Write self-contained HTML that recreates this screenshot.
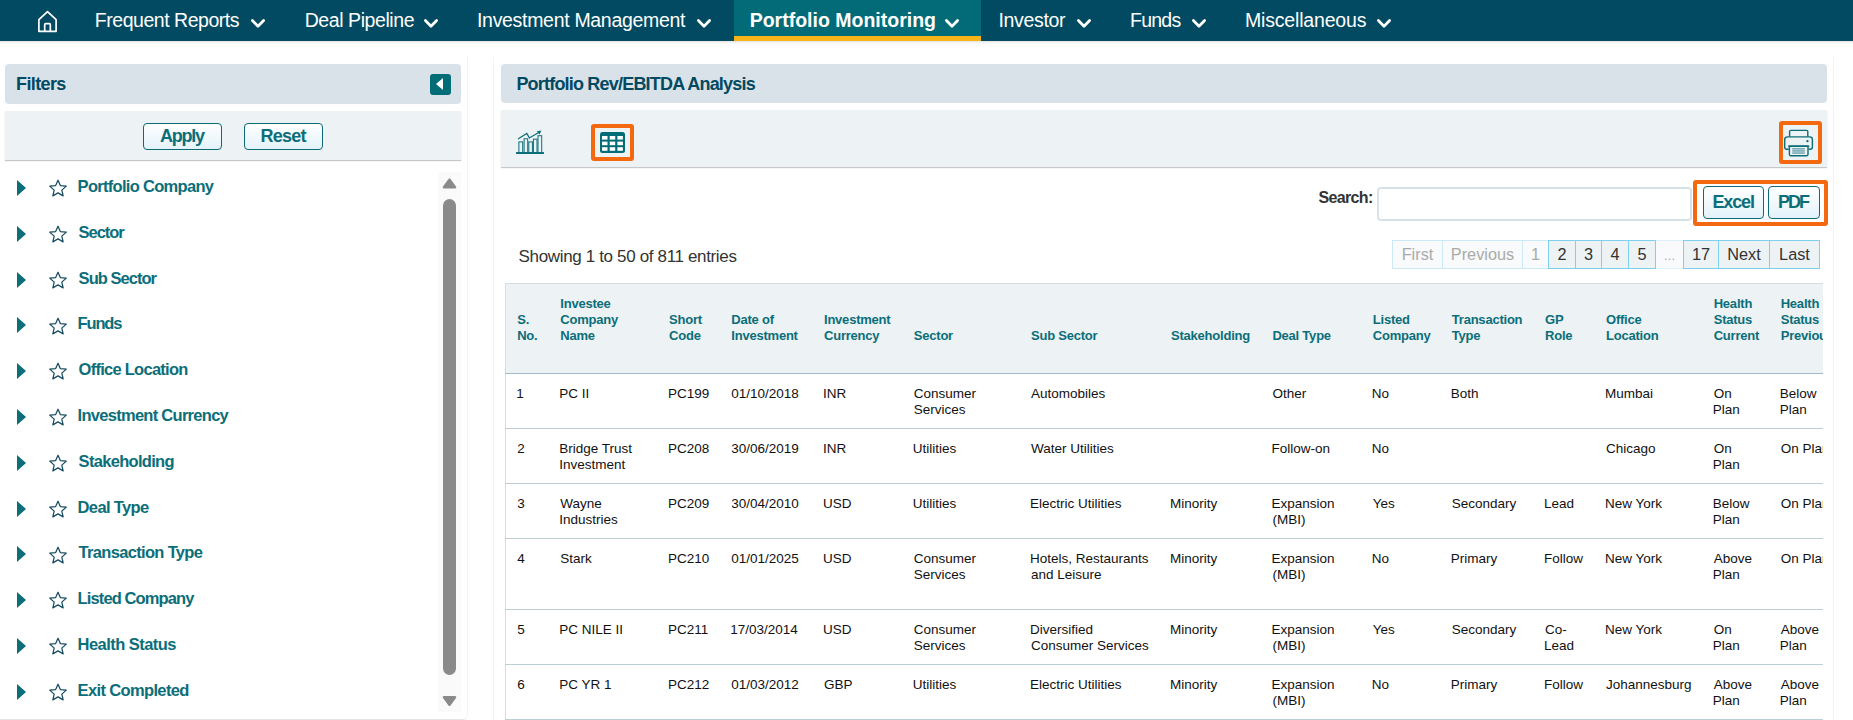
<!DOCTYPE html>
<html><head><meta charset="utf-8"><style>
*{box-sizing:border-box;margin:0;padding:0}
html,body{width:1853px;height:720px;overflow:hidden;background:#fff;font-family:"Liberation Sans",sans-serif}
.abs{position:absolute}
#nav{position:absolute;left:0;top:0;width:1853px;height:41px;background:#024a62}
#navsh{position:absolute;left:0;top:41px;width:1853px;height:3px;background:linear-gradient(rgba(90,50,50,.13),rgba(90,50,50,0))}
.ni{position:absolute;top:0;height:36px;color:#fff;font-size:19px;line-height:20px;white-space:nowrap}
.chev{position:absolute;top:19px}
#active{position:absolute;left:734px;top:0;width:247px;height:41px;background:#036b78;border-bottom:5px solid #f6b41a}
.panel{position:absolute;background:#fff;border:1px solid #f3f3f3;border-top:0;border-bottom-color:#e4e4e4;border-radius:0 0 5px 5px}
.hdr{position:absolute;background:#d8e2e8;border-radius:4px}
.tb{position:absolute;background:#edf2f5;box-shadow:0 1px 1px rgba(0,0,0,.22)}
.btn{position:absolute;border:1px solid #0b6b76;border-radius:4px;background:linear-gradient(#fff,#e3f2fa);color:#0b6e79;font-weight:bold;text-align:center;white-space:nowrap}
.fi{position:absolute;left:0;height:24px;width:430px}
.fi .tri{position:absolute;left:17px;top:0px;width:0;height:0;border-top:8px solid transparent;border-bottom:8px solid transparent;border-left:9px solid #0b6e78}
.fi svg{position:absolute;left:48px;top:0px}
.fi .t{position:absolute;left:78px;font-size:15.5px;font-weight:bold;color:#0b6e79;line-height:20px;white-space:nowrap}
.orange{position:absolute;border:4px solid #f4680f;border-radius:3px}
.pg{position:absolute;top:240px;height:29px;border:1px solid #7fd0ef;background:#edf2f5;color:#333;font-size:16px;line-height:27px;text-align:center}
.pg.dis{background:#f8fafb;border-color:#cbe9f6;color:#aaa}
#tbl{position:absolute;left:505px;top:283px;width:1318px;height:437px;overflow:hidden;border-left:1px solid #dde3e6}
.th{position:absolute;font-size:12.5px;font-weight:bold;color:#0b6e79;line-height:16px;white-space:nowrap}
.td{position:absolute;font-size:13.5px;color:#222;line-height:16px;white-space:nowrap}
.rb{position:absolute;left:0;width:1318px;height:1px;background:#bccfd6}
</style></head><body>
<div id="nav">
<svg class="abs" style="left:37px;top:10px" width="21" height="23" viewBox="0 0 21 23">
<path d="M1.9 21.3 V9.6 L10.5 1.6 L19.1 9.6 V21.3 Z" fill="none" stroke="#fff" stroke-width="1.7" stroke-linejoin="round"/>
<path d="M7.7 21.3 V14.5 Q7.7 13.6 8.6 13.6 H12.4 Q13.3 13.6 13.3 14.5 V21.3" fill="none" stroke="#fff" stroke-width="1.7"/>
</svg>
<div id="active"></div>
<svg class="abs" style="left:250px;top:18px" width="17" height="11" viewBox="0 0 17 11"><polyline points="2.4,2.6 8,8.2 13.6,2.6" fill="none" stroke="#fff" stroke-width="2.8" stroke-linecap="round" stroke-linejoin="round"/></svg>
<svg class="abs" style="left:423px;top:18px" width="17" height="11" viewBox="0 0 17 11"><polyline points="2.4,2.6 8,8.2 13.6,2.6" fill="none" stroke="#fff" stroke-width="2.8" stroke-linecap="round" stroke-linejoin="round"/></svg>
<svg class="abs" style="left:696px;top:18px" width="17" height="11" viewBox="0 0 17 11"><polyline points="2.4,2.6 8,8.2 13.6,2.6" fill="none" stroke="#fff" stroke-width="2.8" stroke-linecap="round" stroke-linejoin="round"/></svg>
<svg class="abs" style="left:944px;top:18px" width="17" height="11" viewBox="0 0 17 11"><polyline points="2.4,2.6 8,8.2 13.6,2.6" fill="none" stroke="#fff" stroke-width="2.8" stroke-linecap="round" stroke-linejoin="round"/></svg>
<svg class="abs" style="left:1076px;top:18px" width="17" height="11" viewBox="0 0 17 11"><polyline points="2.4,2.6 8,8.2 13.6,2.6" fill="none" stroke="#fff" stroke-width="2.8" stroke-linecap="round" stroke-linejoin="round"/></svg>
<svg class="abs" style="left:1191px;top:18px" width="17" height="11" viewBox="0 0 17 11"><polyline points="2.4,2.6 8,8.2 13.6,2.6" fill="none" stroke="#fff" stroke-width="2.8" stroke-linecap="round" stroke-linejoin="round"/></svg>
<svg class="abs" style="left:1376px;top:18px" width="17" height="11" viewBox="0 0 17 11"><polyline points="2.4,2.6 8,8.2 13.6,2.6" fill="none" stroke="#fff" stroke-width="2.8" stroke-linecap="round" stroke-linejoin="round"/></svg>
<div class="abs" style="left:94.80px;top:8.14px;font-size:19.5px;line-height:24px;color:#fff;letter-spacing:-0.466px;white-space:nowrap">Frequent Reports</div>
<div class="abs" style="left:304.70px;top:8.14px;font-size:19.5px;line-height:24px;color:#fff;letter-spacing:-0.422px;white-space:nowrap">Deal Pipeline</div>
<div class="abs" style="left:477.00px;top:8.14px;font-size:19.5px;line-height:24px;color:#fff;letter-spacing:-0.310px;white-space:nowrap">Investment Management</div>
<div class="abs" style="left:749.70px;top:8.14px;font-size:19.5px;line-height:24px;color:#fff;font-weight:bold;white-space:nowrap">Portfolio Monitoring</div>
<div class="abs" style="left:998.50px;top:8.14px;font-size:19.5px;line-height:24px;color:#fff;letter-spacing:-0.339px;white-space:nowrap">Investor</div>
<div class="abs" style="left:1130.00px;top:8.14px;font-size:19.5px;line-height:24px;color:#fff;letter-spacing:-0.762px;white-space:nowrap">Funds</div>
<div class="abs" style="left:1245.00px;top:8.14px;font-size:19.5px;line-height:24px;color:#fff;letter-spacing:-0.176px;white-space:nowrap">Miscellaneous</div>
</div>
<div id="navsh"></div>
<div class="panel" style="left:-6px;top:57px;width:474px;height:663px"></div>
<div class="hdr" style="left:5px;top:64px;width:456px;height:40px"></div>
<div class="abs" style="left:430px;top:74px;width:21px;height:21px;background:#036d77;border-radius:3px"></div>
<div class="abs" style="left:436px;top:78px;width:0;height:0;border-top:6.5px solid transparent;border-bottom:6.5px solid transparent;border-right:7px solid #fff"></div>
<div class="tb" style="left:5px;top:111px;width:456px;height:49px"></div>
<div class="btn" style="left:143px;top:123px;width:79px;height:27px"></div>
<div class="btn" style="left:244px;top:123px;width:79px;height:27px"></div>
<div class="abs" style="left:17px;top:180.0px;width:0;height:0;border-top:8px solid transparent;border-bottom:8px solid transparent;border-left:9px solid #0b6e78"></div>
<svg class="abs" style="left:48px;top:179.2px" width="20" height="19" viewBox="0 0 20 19"><path d="M10 1.2 L12.35 6.6 L18.3 7.1 L13.8 11.1 L15.15 16.9 L10 13.85 L4.85 16.9 L6.2 11.1 L1.7 7.1 L7.65 6.6 Z" fill="none" stroke="#174c60" stroke-width="1.25" stroke-linejoin="round"/></svg>
<div class="abs" style="left:17px;top:225.8px;width:0;height:0;border-top:8px solid transparent;border-bottom:8px solid transparent;border-left:9px solid #0b6e78"></div>
<svg class="abs" style="left:48px;top:225.0px" width="20" height="19" viewBox="0 0 20 19"><path d="M10 1.2 L12.35 6.6 L18.3 7.1 L13.8 11.1 L15.15 16.9 L10 13.85 L4.85 16.9 L6.2 11.1 L1.7 7.1 L7.65 6.6 Z" fill="none" stroke="#174c60" stroke-width="1.25" stroke-linejoin="round"/></svg>
<div class="abs" style="left:17px;top:271.6px;width:0;height:0;border-top:8px solid transparent;border-bottom:8px solid transparent;border-left:9px solid #0b6e78"></div>
<svg class="abs" style="left:48px;top:270.8px" width="20" height="19" viewBox="0 0 20 19"><path d="M10 1.2 L12.35 6.6 L18.3 7.1 L13.8 11.1 L15.15 16.9 L10 13.85 L4.85 16.9 L6.2 11.1 L1.7 7.1 L7.65 6.6 Z" fill="none" stroke="#174c60" stroke-width="1.25" stroke-linejoin="round"/></svg>
<div class="abs" style="left:17px;top:317.4px;width:0;height:0;border-top:8px solid transparent;border-bottom:8px solid transparent;border-left:9px solid #0b6e78"></div>
<svg class="abs" style="left:48px;top:316.6px" width="20" height="19" viewBox="0 0 20 19"><path d="M10 1.2 L12.35 6.6 L18.3 7.1 L13.8 11.1 L15.15 16.9 L10 13.85 L4.85 16.9 L6.2 11.1 L1.7 7.1 L7.65 6.6 Z" fill="none" stroke="#174c60" stroke-width="1.25" stroke-linejoin="round"/></svg>
<div class="abs" style="left:17px;top:363.2px;width:0;height:0;border-top:8px solid transparent;border-bottom:8px solid transparent;border-left:9px solid #0b6e78"></div>
<svg class="abs" style="left:48px;top:362.4px" width="20" height="19" viewBox="0 0 20 19"><path d="M10 1.2 L12.35 6.6 L18.3 7.1 L13.8 11.1 L15.15 16.9 L10 13.85 L4.85 16.9 L6.2 11.1 L1.7 7.1 L7.65 6.6 Z" fill="none" stroke="#174c60" stroke-width="1.25" stroke-linejoin="round"/></svg>
<div class="abs" style="left:17px;top:409.0px;width:0;height:0;border-top:8px solid transparent;border-bottom:8px solid transparent;border-left:9px solid #0b6e78"></div>
<svg class="abs" style="left:48px;top:408.2px" width="20" height="19" viewBox="0 0 20 19"><path d="M10 1.2 L12.35 6.6 L18.3 7.1 L13.8 11.1 L15.15 16.9 L10 13.85 L4.85 16.9 L6.2 11.1 L1.7 7.1 L7.65 6.6 Z" fill="none" stroke="#174c60" stroke-width="1.25" stroke-linejoin="round"/></svg>
<div class="abs" style="left:17px;top:454.8px;width:0;height:0;border-top:8px solid transparent;border-bottom:8px solid transparent;border-left:9px solid #0b6e78"></div>
<svg class="abs" style="left:48px;top:454.0px" width="20" height="19" viewBox="0 0 20 19"><path d="M10 1.2 L12.35 6.6 L18.3 7.1 L13.8 11.1 L15.15 16.9 L10 13.85 L4.85 16.9 L6.2 11.1 L1.7 7.1 L7.65 6.6 Z" fill="none" stroke="#174c60" stroke-width="1.25" stroke-linejoin="round"/></svg>
<div class="abs" style="left:17px;top:500.6px;width:0;height:0;border-top:8px solid transparent;border-bottom:8px solid transparent;border-left:9px solid #0b6e78"></div>
<svg class="abs" style="left:48px;top:499.8px" width="20" height="19" viewBox="0 0 20 19"><path d="M10 1.2 L12.35 6.6 L18.3 7.1 L13.8 11.1 L15.15 16.9 L10 13.85 L4.85 16.9 L6.2 11.1 L1.7 7.1 L7.65 6.6 Z" fill="none" stroke="#174c60" stroke-width="1.25" stroke-linejoin="round"/></svg>
<div class="abs" style="left:17px;top:546.4px;width:0;height:0;border-top:8px solid transparent;border-bottom:8px solid transparent;border-left:9px solid #0b6e78"></div>
<svg class="abs" style="left:48px;top:545.6px" width="20" height="19" viewBox="0 0 20 19"><path d="M10 1.2 L12.35 6.6 L18.3 7.1 L13.8 11.1 L15.15 16.9 L10 13.85 L4.85 16.9 L6.2 11.1 L1.7 7.1 L7.65 6.6 Z" fill="none" stroke="#174c60" stroke-width="1.25" stroke-linejoin="round"/></svg>
<div class="abs" style="left:17px;top:592.2px;width:0;height:0;border-top:8px solid transparent;border-bottom:8px solid transparent;border-left:9px solid #0b6e78"></div>
<svg class="abs" style="left:48px;top:591.4px" width="20" height="19" viewBox="0 0 20 19"><path d="M10 1.2 L12.35 6.6 L18.3 7.1 L13.8 11.1 L15.15 16.9 L10 13.85 L4.85 16.9 L6.2 11.1 L1.7 7.1 L7.65 6.6 Z" fill="none" stroke="#174c60" stroke-width="1.25" stroke-linejoin="round"/></svg>
<div class="abs" style="left:17px;top:638.0px;width:0;height:0;border-top:8px solid transparent;border-bottom:8px solid transparent;border-left:9px solid #0b6e78"></div>
<svg class="abs" style="left:48px;top:637.2px" width="20" height="19" viewBox="0 0 20 19"><path d="M10 1.2 L12.35 6.6 L18.3 7.1 L13.8 11.1 L15.15 16.9 L10 13.85 L4.85 16.9 L6.2 11.1 L1.7 7.1 L7.65 6.6 Z" fill="none" stroke="#174c60" stroke-width="1.25" stroke-linejoin="round"/></svg>
<div class="abs" style="left:17px;top:683.8px;width:0;height:0;border-top:8px solid transparent;border-bottom:8px solid transparent;border-left:9px solid #0b6e78"></div>
<svg class="abs" style="left:48px;top:683.0px" width="20" height="19" viewBox="0 0 20 19"><path d="M10 1.2 L12.35 6.6 L18.3 7.1 L13.8 11.1 L15.15 16.9 L10 13.85 L4.85 16.9 L6.2 11.1 L1.7 7.1 L7.65 6.6 Z" fill="none" stroke="#174c60" stroke-width="1.25" stroke-linejoin="round"/></svg>
<div class="abs" style="left:438px;top:172px;width:23px;height:540px;background:#fafafa"></div>
<svg class="abs" style="left:441px;top:177px" width="17" height="13" viewBox="0 0 17 13"><path d="M8.5 2.8 L14 10.2 L3 10.2 Z" fill="#8a8a8a" stroke="#8a8a8a" stroke-width="2.6" stroke-linejoin="round"/></svg>
<div class="abs" style="left:443px;top:199px;width:13px;height:476px;background:#8a8a8a;border-radius:6.5px"></div>
<svg class="abs" style="left:441px;top:695px" width="17" height="13" viewBox="0 0 17 13"><path d="M8.5 9.6 L14 2.2 L3 2.2 Z" fill="#8a8a8a" stroke="#8a8a8a" stroke-width="2.6" stroke-linejoin="round"/></svg>
<div class="panel" style="left:493px;top:57px;width:1341px;height:700px"></div>
<div class="hdr" style="left:501px;top:64px;width:1326px;height:39px"></div>
<div class="tb" style="left:501px;top:110px;width:1326px;height:57px"></div>
<svg class="abs" style="left:515px;top:130px" width="31" height="25" viewBox="0 0 31 25">
<g fill="none" stroke="#0b6e78" stroke-width="1">
<rect x="3.9" y="11.9" width="3.8" height="11"/><rect x="9.1" y="8.8" width="3.6" height="14"/><rect x="13.8" y="11.9" width="3.6" height="11"/><rect x="18.4" y="9.2" width="3.6" height="13.7"/><rect x="23" y="5.7" width="3.7" height="17.2"/>
<path d="M3 8.9 L11.8 3.4 L14.3 7.9 L24.2 2.2" stroke-width="1.2"/>
</g>
<path d="M26.3 0.6 L21.9 1.3 L24.6 4.6 Z" fill="#0b6e78"/>
<rect x="1" y="22" width="28" height="1.9" rx="0.5" fill="#0b6e78"/>
</svg>
<div class="orange" style="left:591px;top:124px;width:43px;height:37px"></div>
<svg class="abs" style="left:600px;top:132px" width="25" height="21" viewBox="0 0 25 21">
<rect x="0" y="0" width="25" height="21" rx="2.5" fill="#036d77"/>
<g fill="#fff">
<rect x="2" y="4" width="5.5" height="3.6"/><rect x="9.7" y="4" width="5.5" height="3.6"/><rect x="17.4" y="4" width="5.5" height="3.6"/>
<rect x="2" y="9.6" width="5.5" height="3.6"/><rect x="9.7" y="9.6" width="5.5" height="3.6"/><rect x="17.4" y="9.6" width="5.5" height="3.6"/>
<rect x="2" y="15.2" width="5.5" height="3.6"/><rect x="9.7" y="15.2" width="5.5" height="3.6"/><rect x="17.4" y="15.2" width="5.5" height="3.6"/>
</g></svg>
<div class="orange" style="left:1779px;top:121px;width:43px;height:43px"></div>
<svg class="abs" style="left:1783px;top:129px" width="31" height="28" viewBox="0 0 31 28">
<g fill="none" stroke="#0b6e78" stroke-width="1.4" stroke-linejoin="round">
<path d="M6.6 7.6 V2.6 Q6.6 1.4 7.8 1.4 H23.6 Q24.8 1.4 24.8 2.6 V7.6"/>
<path d="M5.8 20.3 H3.9 Q1.7 20.3 1.7 18.1 V10.4 Q1.7 7.9 4.6 7.9 H26.6 Q29.4 7.9 29.4 10.4 V18.1 Q29.4 20.3 27.2 20.3 H25.6"/>
<path d="M6.4 17.3 H25 V25.6 Q25 26.7 23.9 26.7 H7.5 Q6.4 26.7 6.4 25.6 Z"/>
<path d="M5.3 17.2 H26.2" stroke-width="1.6"/>
</g>
<circle cx="24.4" cy="12.1" r="1.2" fill="#0b6e78"/>
<g fill="#5a9ca4"><rect x="9.2" y="19.2" width="12.6" height="1.3"/><rect x="9.2" y="21.3" width="12.6" height="1.3"/><rect x="9.2" y="23.4" width="12.6" height="1.3"/></g>
</svg>
<div class="abs" style="left:1377px;top:187px;width:315px;height:34px;border:2px solid #d8e3e8;border-radius:4px;background:#fff"></div>
<div class="orange" style="left:1693px;top:180px;width:135px;height:46px"></div>
<div class="btn" style="left:1703px;top:186px;width:61px;height:33px"></div>
<div class="btn" style="left:1768px;top:186px;width:52px;height:33px"></div>
<div class="pg dis" style="left:1655px;width:29px;border-color:#def1f9;color:#aaa;font-size:12px;line-height:31px">…</div>
<div class="pg dis" style="left:1392px;width:51px"></div>
<div class="pg dis" style="left:1442px;width:81px"></div>
<div class="pg dis" style="left:1522px;width:27px"></div>
<div class="pg" style="left:1548px;width:28px"></div>
<div class="pg" style="left:1575px;width:27px"></div>
<div class="pg" style="left:1601px;width:28px"></div>
<div class="pg" style="left:1628px;width:28px"></div>
<div class="pg" style="left:1683px;width:36px"></div>
<div class="pg" style="left:1718px;width:52px"></div>
<div class="pg" style="left:1769px;width:51px"></div>
<div class="abs" style="left:505px;top:283px;width:1318px;height:90px;background:#edf2f5;border-top:1px solid #d6dde1"></div>
<div class="abs" style="left:505px;top:283px;width:1px;height:437px;background:#d9dcde"></div>
<div class="abs" style="left:505px;top:373px;width:1318px;height:1px;background:#9fbcc6"></div>
<div class="abs" style="left:505px;top:428px;width:1318px;height:1px;background:#bccdd4"></div>
<div class="abs" style="left:505px;top:483px;width:1318px;height:1px;background:#bccdd4"></div>
<div class="abs" style="left:505px;top:538px;width:1318px;height:1px;background:#bccdd4"></div>
<div class="abs" style="left:505px;top:609px;width:1318px;height:1px;background:#bccdd4"></div>
<div class="abs" style="left:505px;top:664px;width:1318px;height:1px;background:#bccdd4"></div>
<div class="abs" style="left:505px;top:719px;width:1318px;height:1px;background:#bccdd4"></div>
<div class="abs" style="left:16.10px;top:72.56px;font-size:18px;line-height:22px;color:#034962;font-weight:bold;letter-spacing:-0.634px;white-space:nowrap">Filters</div>
<div class="abs" style="left:160.00px;top:124.56px;font-size:18px;line-height:22px;color:#0b6e79;font-weight:bold;letter-spacing:-1.248px;white-space:nowrap">Apply</div>
<div class="abs" style="left:260.50px;top:124.56px;font-size:18px;line-height:22px;color:#0b6e79;font-weight:bold;letter-spacing:-0.758px;white-space:nowrap">Reset</div>
<div class="abs" style="left:77.60px;top:175.98px;font-size:16.5px;line-height:21px;color:#0b6e79;font-weight:bold;letter-spacing:-0.700px;white-space:nowrap">Portfolio Company</div>
<div class="abs" style="left:78.60px;top:221.78px;font-size:16.5px;line-height:21px;color:#0b6e79;font-weight:bold;letter-spacing:-1.046px;white-space:nowrap">Sector</div>
<div class="abs" style="left:78.60px;top:267.58px;font-size:16.5px;line-height:21px;color:#0b6e79;font-weight:bold;letter-spacing:-0.964px;white-space:nowrap">Sub Sector</div>
<div class="abs" style="left:77.60px;top:313.38px;font-size:16.5px;line-height:21px;color:#0b6e79;font-weight:bold;letter-spacing:-1.179px;white-space:nowrap">Funds</div>
<div class="abs" style="left:78.60px;top:359.18px;font-size:16.5px;line-height:21px;color:#0b6e79;font-weight:bold;letter-spacing:-0.737px;white-space:nowrap">Office Location</div>
<div class="abs" style="left:77.60px;top:404.98px;font-size:16.5px;line-height:21px;color:#0b6e79;font-weight:bold;letter-spacing:-0.720px;white-space:nowrap">Investment Currency</div>
<div class="abs" style="left:78.60px;top:450.78px;font-size:16.5px;line-height:21px;color:#0b6e79;font-weight:bold;letter-spacing:-0.692px;white-space:nowrap">Stakeholding</div>
<div class="abs" style="left:77.60px;top:496.58px;font-size:16.5px;line-height:21px;color:#0b6e79;font-weight:bold;letter-spacing:-0.643px;white-space:nowrap">Deal Type</div>
<div class="abs" style="left:78.60px;top:542.38px;font-size:16.5px;line-height:21px;color:#0b6e79;font-weight:bold;letter-spacing:-0.680px;white-space:nowrap">Transaction Type</div>
<div class="abs" style="left:77.60px;top:588.18px;font-size:16.5px;line-height:21px;color:#0b6e79;font-weight:bold;letter-spacing:-0.883px;white-space:nowrap">Listed Company</div>
<div class="abs" style="left:77.60px;top:633.98px;font-size:16.5px;line-height:21px;color:#0b6e79;font-weight:bold;letter-spacing:-0.547px;white-space:nowrap">Health Status</div>
<div class="abs" style="left:77.60px;top:679.78px;font-size:16.5px;line-height:21px;color:#0b6e79;font-weight:bold;letter-spacing:-0.640px;white-space:nowrap">Exit Completed</div>
<div class="abs" style="left:516.40px;top:72.56px;font-size:18px;line-height:22px;color:#034962;font-weight:bold;letter-spacing:-0.801px;white-space:nowrap">Portfolio Rev/EBITDA Analysis</div>
<div class="abs" style="left:1318.40px;top:188.20px;font-size:16px;line-height:20px;color:#333;font-weight:bold;letter-spacing:-0.628px;white-space:nowrap">Search:</div>
<div class="abs" style="left:1712.50px;top:190.56px;font-size:18px;line-height:22px;color:#0b6e79;font-weight:bold;letter-spacing:-1.135px;white-space:nowrap">Excel</div>
<div class="abs" style="left:1778.00px;top:190.56px;font-size:18px;line-height:22px;color:#0b6e79;font-weight:bold;letter-spacing:-2.002px;white-space:nowrap">PDF</div>
<div class="abs" style="left:518.60px;top:246.31px;font-size:17px;line-height:21px;color:#333;letter-spacing:-0.348px;white-space:nowrap">Showing 1 to 50 of 811 entries</div>
<div class="abs" style="left:1401.68px;top:244.05px;font-size:16.3px;line-height:20px;color:#aaa;white-space:nowrap">First</div>
<div class="abs" style="left:1450.83px;top:244.05px;font-size:16.3px;line-height:20px;color:#aaa;white-space:nowrap">Previous</div>
<div class="abs" style="left:1530.97px;top:244.05px;font-size:16.3px;line-height:20px;color:#aaa;white-space:nowrap">1</div>
<div class="abs" style="left:1557.47px;top:244.05px;font-size:16.3px;line-height:20px;color:#333;white-space:nowrap">2</div>
<div class="abs" style="left:1583.97px;top:244.05px;font-size:16.3px;line-height:20px;color:#333;white-space:nowrap">3</div>
<div class="abs" style="left:1610.47px;top:244.05px;font-size:16.3px;line-height:20px;color:#333;white-space:nowrap">4</div>
<div class="abs" style="left:1637.47px;top:244.05px;font-size:16.3px;line-height:20px;color:#333;white-space:nowrap">5</div>
<div class="abs" style="left:1691.95px;top:244.05px;font-size:16.3px;line-height:20px;color:#333;white-space:nowrap">17</div>
<div class="abs" style="left:1727.26px;top:244.05px;font-size:16.3px;line-height:20px;color:#333;white-space:nowrap">Next</div>
<div class="abs" style="left:1779.11px;top:244.05px;font-size:16.3px;line-height:20px;color:#333;white-space:nowrap">Last</div>
<div class="abs" style="left:505px;top:283px;width:1318px;height:437px;overflow:hidden"><div class="abs" style="left:12.20px;top:28.99px;font-size:13px;line-height:16px;color:#0b6e79;font-weight:bold;letter-spacing:-0.22px;white-space:nowrap">S.</div>
<div class="abs" style="left:12.20px;top:45.09px;font-size:13px;line-height:16px;color:#0b6e79;font-weight:bold;letter-spacing:-0.22px;white-space:nowrap">No.</div>
<div class="abs" style="left:55.30px;top:12.89px;font-size:13px;line-height:16px;color:#0b6e79;font-weight:bold;letter-spacing:-0.22px;white-space:nowrap">Investee</div>
<div class="abs" style="left:55.30px;top:28.99px;font-size:13px;line-height:16px;color:#0b6e79;font-weight:bold;letter-spacing:-0.22px;white-space:nowrap">Company</div>
<div class="abs" style="left:55.30px;top:45.09px;font-size:13px;line-height:16px;color:#0b6e79;font-weight:bold;letter-spacing:-0.22px;white-space:nowrap">Name</div>
<div class="abs" style="left:164.10px;top:28.99px;font-size:13px;line-height:16px;color:#0b6e79;font-weight:bold;letter-spacing:-0.22px;white-space:nowrap">Short</div>
<div class="abs" style="left:164.10px;top:45.09px;font-size:13px;line-height:16px;color:#0b6e79;font-weight:bold;letter-spacing:-0.22px;white-space:nowrap">Code</div>
<div class="abs" style="left:226.30px;top:28.99px;font-size:13px;line-height:16px;color:#0b6e79;font-weight:bold;letter-spacing:-0.22px;white-space:nowrap">Date of</div>
<div class="abs" style="left:226.30px;top:45.09px;font-size:13px;line-height:16px;color:#0b6e79;font-weight:bold;letter-spacing:-0.22px;white-space:nowrap">Investment</div>
<div class="abs" style="left:319.00px;top:28.99px;font-size:13px;line-height:16px;color:#0b6e79;font-weight:bold;letter-spacing:-0.22px;white-space:nowrap">Investment</div>
<div class="abs" style="left:319.00px;top:45.09px;font-size:13px;line-height:16px;color:#0b6e79;font-weight:bold;letter-spacing:-0.22px;white-space:nowrap">Currency</div>
<div class="abs" style="left:408.80px;top:45.09px;font-size:13px;line-height:16px;color:#0b6e79;font-weight:bold;letter-spacing:-0.22px;white-space:nowrap">Sector</div>
<div class="abs" style="left:526.00px;top:45.09px;font-size:13px;line-height:16px;color:#0b6e79;font-weight:bold;letter-spacing:-0.22px;white-space:nowrap">Sub Sector</div>
<div class="abs" style="left:666.00px;top:45.09px;font-size:13px;line-height:16px;color:#0b6e79;font-weight:bold;letter-spacing:-0.22px;white-space:nowrap">Stakeholding</div>
<div class="abs" style="left:767.40px;top:45.09px;font-size:13px;line-height:16px;color:#0b6e79;font-weight:bold;letter-spacing:-0.22px;white-space:nowrap">Deal Type</div>
<div class="abs" style="left:867.80px;top:28.99px;font-size:13px;line-height:16px;color:#0b6e79;font-weight:bold;letter-spacing:-0.22px;white-space:nowrap">Listed</div>
<div class="abs" style="left:867.80px;top:45.09px;font-size:13px;line-height:16px;color:#0b6e79;font-weight:bold;letter-spacing:-0.22px;white-space:nowrap">Company</div>
<div class="abs" style="left:946.80px;top:28.99px;font-size:13px;line-height:16px;color:#0b6e79;font-weight:bold;letter-spacing:-0.22px;white-space:nowrap">Transaction</div>
<div class="abs" style="left:946.80px;top:45.09px;font-size:13px;line-height:16px;color:#0b6e79;font-weight:bold;letter-spacing:-0.22px;white-space:nowrap">Type</div>
<div class="abs" style="left:1040.00px;top:28.99px;font-size:13px;line-height:16px;color:#0b6e79;font-weight:bold;letter-spacing:-0.22px;white-space:nowrap">GP</div>
<div class="abs" style="left:1040.00px;top:45.09px;font-size:13px;line-height:16px;color:#0b6e79;font-weight:bold;letter-spacing:-0.22px;white-space:nowrap">Role</div>
<div class="abs" style="left:1101.00px;top:28.99px;font-size:13px;line-height:16px;color:#0b6e79;font-weight:bold;letter-spacing:-0.22px;white-space:nowrap">Office</div>
<div class="abs" style="left:1101.00px;top:45.09px;font-size:13px;line-height:16px;color:#0b6e79;font-weight:bold;letter-spacing:-0.22px;white-space:nowrap">Location</div>
<div class="abs" style="left:1208.70px;top:12.89px;font-size:13px;line-height:16px;color:#0b6e79;font-weight:bold;letter-spacing:-0.22px;white-space:nowrap">Health</div>
<div class="abs" style="left:1208.70px;top:28.99px;font-size:13px;line-height:16px;color:#0b6e79;font-weight:bold;letter-spacing:-0.22px;white-space:nowrap">Status</div>
<div class="abs" style="left:1208.70px;top:45.09px;font-size:13px;line-height:16px;color:#0b6e79;font-weight:bold;letter-spacing:-0.22px;white-space:nowrap">Current</div>
<div class="abs" style="left:1275.70px;top:12.89px;font-size:13px;line-height:16px;color:#0b6e79;font-weight:bold;letter-spacing:-0.22px;white-space:nowrap">Health</div>
<div class="abs" style="left:1275.70px;top:28.99px;font-size:13px;line-height:16px;color:#0b6e79;font-weight:bold;letter-spacing:-0.22px;white-space:nowrap">Status</div>
<div class="abs" style="left:1275.70px;top:45.09px;font-size:13px;line-height:16px;color:#0b6e79;font-weight:bold;letter-spacing:-0.22px;white-space:nowrap">Previous</div>
<div class="abs" style="left:11.20px;top:102.12px;font-size:13.5px;line-height:17px;color:#111;white-space:nowrap">1</div>
<div class="abs" style="left:54.30px;top:102.12px;font-size:13.5px;line-height:17px;color:#111;white-space:nowrap">PC II</div>
<div class="abs" style="left:163.10px;top:102.12px;font-size:13.5px;line-height:17px;color:#111;white-space:nowrap">PC199</div>
<div class="abs" style="left:226.30px;top:102.12px;font-size:13.5px;line-height:17px;color:#111;white-space:nowrap">01/10/2018</div>
<div class="abs" style="left:318.00px;top:102.12px;font-size:13.5px;line-height:17px;color:#111;white-space:nowrap">INR</div>
<div class="abs" style="left:408.80px;top:102.12px;font-size:13.5px;line-height:17px;color:#111;white-space:nowrap">Consumer</div>
<div class="abs" style="left:408.80px;top:118.12px;font-size:13.5px;line-height:17px;color:#111;white-space:nowrap">Services</div>
<div class="abs" style="left:526.00px;top:102.12px;font-size:13.5px;line-height:17px;color:#111;white-space:nowrap">Automobiles</div>
<div class="abs" style="left:767.40px;top:102.12px;font-size:13.5px;line-height:17px;color:#111;white-space:nowrap">Other</div>
<div class="abs" style="left:866.80px;top:102.12px;font-size:13.5px;line-height:17px;color:#111;white-space:nowrap">No</div>
<div class="abs" style="left:945.80px;top:102.12px;font-size:13.5px;line-height:17px;color:#111;white-space:nowrap">Both</div>
<div class="abs" style="left:1100.00px;top:102.12px;font-size:13.5px;line-height:17px;color:#111;white-space:nowrap">Mumbai</div>
<div class="abs" style="left:1208.70px;top:102.12px;font-size:13.5px;line-height:17px;color:#111;white-space:nowrap">On</div>
<div class="abs" style="left:1207.70px;top:118.12px;font-size:13.5px;line-height:17px;color:#111;white-space:nowrap">Plan</div>
<div class="abs" style="left:1274.70px;top:102.12px;font-size:13.5px;line-height:17px;color:#111;white-space:nowrap">Below</div>
<div class="abs" style="left:1274.70px;top:118.12px;font-size:13.5px;line-height:17px;color:#111;white-space:nowrap">Plan</div>
<div class="abs" style="left:12.20px;top:157.12px;font-size:13.5px;line-height:17px;color:#111;white-space:nowrap">2</div>
<div class="abs" style="left:54.30px;top:157.12px;font-size:13.5px;line-height:17px;color:#111;white-space:nowrap">Bridge Trust</div>
<div class="abs" style="left:54.30px;top:173.12px;font-size:13.5px;line-height:17px;color:#111;white-space:nowrap">Investment</div>
<div class="abs" style="left:163.10px;top:157.12px;font-size:13.5px;line-height:17px;color:#111;white-space:nowrap">PC208</div>
<div class="abs" style="left:226.30px;top:157.12px;font-size:13.5px;line-height:17px;color:#111;white-space:nowrap">30/06/2019</div>
<div class="abs" style="left:318.00px;top:157.12px;font-size:13.5px;line-height:17px;color:#111;white-space:nowrap">INR</div>
<div class="abs" style="left:407.80px;top:157.12px;font-size:13.5px;line-height:17px;color:#111;white-space:nowrap">Utilities</div>
<div class="abs" style="left:526.00px;top:157.12px;font-size:13.5px;line-height:17px;color:#111;white-space:nowrap">Water Utilities</div>
<div class="abs" style="left:766.40px;top:157.12px;font-size:13.5px;line-height:17px;color:#111;white-space:nowrap">Follow-on</div>
<div class="abs" style="left:866.80px;top:157.12px;font-size:13.5px;line-height:17px;color:#111;white-space:nowrap">No</div>
<div class="abs" style="left:1101.00px;top:157.12px;font-size:13.5px;line-height:17px;color:#111;white-space:nowrap">Chicago</div>
<div class="abs" style="left:1208.70px;top:157.12px;font-size:13.5px;line-height:17px;color:#111;white-space:nowrap">On</div>
<div class="abs" style="left:1207.70px;top:173.12px;font-size:13.5px;line-height:17px;color:#111;white-space:nowrap">Plan</div>
<div class="abs" style="left:1275.70px;top:157.12px;font-size:13.5px;line-height:17px;color:#111;white-space:nowrap">On Plan</div>
<div class="abs" style="left:12.20px;top:212.12px;font-size:13.5px;line-height:17px;color:#111;white-space:nowrap">3</div>
<div class="abs" style="left:55.30px;top:212.12px;font-size:13.5px;line-height:17px;color:#111;white-space:nowrap">Wayne</div>
<div class="abs" style="left:54.30px;top:228.12px;font-size:13.5px;line-height:17px;color:#111;white-space:nowrap">Industries</div>
<div class="abs" style="left:163.10px;top:212.12px;font-size:13.5px;line-height:17px;color:#111;white-space:nowrap">PC209</div>
<div class="abs" style="left:226.30px;top:212.12px;font-size:13.5px;line-height:17px;color:#111;white-space:nowrap">30/04/2010</div>
<div class="abs" style="left:318.00px;top:212.12px;font-size:13.5px;line-height:17px;color:#111;white-space:nowrap">USD</div>
<div class="abs" style="left:407.80px;top:212.12px;font-size:13.5px;line-height:17px;color:#111;white-space:nowrap">Utilities</div>
<div class="abs" style="left:525.00px;top:212.12px;font-size:13.5px;line-height:17px;color:#111;white-space:nowrap">Electric Utilities</div>
<div class="abs" style="left:665.00px;top:212.12px;font-size:13.5px;line-height:17px;color:#111;white-space:nowrap">Minority</div>
<div class="abs" style="left:766.40px;top:212.12px;font-size:13.5px;line-height:17px;color:#111;white-space:nowrap">Expansion</div>
<div class="abs" style="left:767.40px;top:228.12px;font-size:13.5px;line-height:17px;color:#111;white-space:nowrap">(MBI)</div>
<div class="abs" style="left:867.80px;top:212.12px;font-size:13.5px;line-height:17px;color:#111;white-space:nowrap">Yes</div>
<div class="abs" style="left:946.80px;top:212.12px;font-size:13.5px;line-height:17px;color:#111;white-space:nowrap">Secondary</div>
<div class="abs" style="left:1039.00px;top:212.12px;font-size:13.5px;line-height:17px;color:#111;white-space:nowrap">Lead</div>
<div class="abs" style="left:1100.00px;top:212.12px;font-size:13.5px;line-height:17px;color:#111;white-space:nowrap">New York</div>
<div class="abs" style="left:1207.70px;top:212.12px;font-size:13.5px;line-height:17px;color:#111;white-space:nowrap">Below</div>
<div class="abs" style="left:1207.70px;top:228.12px;font-size:13.5px;line-height:17px;color:#111;white-space:nowrap">Plan</div>
<div class="abs" style="left:1275.70px;top:212.12px;font-size:13.5px;line-height:17px;color:#111;white-space:nowrap">On Plan</div>
<div class="abs" style="left:12.20px;top:267.02px;font-size:13.5px;line-height:17px;color:#111;white-space:nowrap">4</div>
<div class="abs" style="left:55.30px;top:267.02px;font-size:13.5px;line-height:17px;color:#111;white-space:nowrap">Stark</div>
<div class="abs" style="left:163.10px;top:267.02px;font-size:13.5px;line-height:17px;color:#111;white-space:nowrap">PC210</div>
<div class="abs" style="left:226.30px;top:267.02px;font-size:13.5px;line-height:17px;color:#111;white-space:nowrap">01/01/2025</div>
<div class="abs" style="left:318.00px;top:267.02px;font-size:13.5px;line-height:17px;color:#111;white-space:nowrap">USD</div>
<div class="abs" style="left:408.80px;top:267.02px;font-size:13.5px;line-height:17px;color:#111;white-space:nowrap">Consumer</div>
<div class="abs" style="left:408.80px;top:283.02px;font-size:13.5px;line-height:17px;color:#111;white-space:nowrap">Services</div>
<div class="abs" style="left:525.00px;top:267.02px;font-size:13.5px;line-height:17px;color:#111;white-space:nowrap">Hotels, Restaurants</div>
<div class="abs" style="left:526.00px;top:283.02px;font-size:13.5px;line-height:17px;color:#111;white-space:nowrap">and Leisure</div>
<div class="abs" style="left:665.00px;top:267.02px;font-size:13.5px;line-height:17px;color:#111;white-space:nowrap">Minority</div>
<div class="abs" style="left:766.40px;top:267.02px;font-size:13.5px;line-height:17px;color:#111;white-space:nowrap">Expansion</div>
<div class="abs" style="left:767.40px;top:283.02px;font-size:13.5px;line-height:17px;color:#111;white-space:nowrap">(MBI)</div>
<div class="abs" style="left:866.80px;top:267.02px;font-size:13.5px;line-height:17px;color:#111;white-space:nowrap">No</div>
<div class="abs" style="left:945.80px;top:267.02px;font-size:13.5px;line-height:17px;color:#111;white-space:nowrap">Primary</div>
<div class="abs" style="left:1039.00px;top:267.02px;font-size:13.5px;line-height:17px;color:#111;white-space:nowrap">Follow</div>
<div class="abs" style="left:1100.00px;top:267.02px;font-size:13.5px;line-height:17px;color:#111;white-space:nowrap">New York</div>
<div class="abs" style="left:1208.70px;top:267.02px;font-size:13.5px;line-height:17px;color:#111;white-space:nowrap">Above</div>
<div class="abs" style="left:1207.70px;top:283.02px;font-size:13.5px;line-height:17px;color:#111;white-space:nowrap">Plan</div>
<div class="abs" style="left:1275.70px;top:267.02px;font-size:13.5px;line-height:17px;color:#111;white-space:nowrap">On Plan</div>
<div class="abs" style="left:12.20px;top:338.02px;font-size:13.5px;line-height:17px;color:#111;white-space:nowrap">5</div>
<div class="abs" style="left:54.30px;top:338.02px;font-size:13.5px;line-height:17px;color:#111;white-space:nowrap">PC NILE II</div>
<div class="abs" style="left:163.10px;top:338.02px;font-size:13.5px;line-height:17px;color:#111;white-space:nowrap">PC211</div>
<div class="abs" style="left:225.30px;top:338.02px;font-size:13.5px;line-height:17px;color:#111;white-space:nowrap">17/03/2014</div>
<div class="abs" style="left:318.00px;top:338.02px;font-size:13.5px;line-height:17px;color:#111;white-space:nowrap">USD</div>
<div class="abs" style="left:408.80px;top:338.02px;font-size:13.5px;line-height:17px;color:#111;white-space:nowrap">Consumer</div>
<div class="abs" style="left:408.80px;top:354.02px;font-size:13.5px;line-height:17px;color:#111;white-space:nowrap">Services</div>
<div class="abs" style="left:525.00px;top:338.02px;font-size:13.5px;line-height:17px;color:#111;white-space:nowrap">Diversified</div>
<div class="abs" style="left:526.00px;top:354.02px;font-size:13.5px;line-height:17px;color:#111;white-space:nowrap">Consumer Services</div>
<div class="abs" style="left:665.00px;top:338.02px;font-size:13.5px;line-height:17px;color:#111;white-space:nowrap">Minority</div>
<div class="abs" style="left:766.40px;top:338.02px;font-size:13.5px;line-height:17px;color:#111;white-space:nowrap">Expansion</div>
<div class="abs" style="left:767.40px;top:354.02px;font-size:13.5px;line-height:17px;color:#111;white-space:nowrap">(MBI)</div>
<div class="abs" style="left:867.80px;top:338.02px;font-size:13.5px;line-height:17px;color:#111;white-space:nowrap">Yes</div>
<div class="abs" style="left:946.80px;top:338.02px;font-size:13.5px;line-height:17px;color:#111;white-space:nowrap">Secondary</div>
<div class="abs" style="left:1040.00px;top:338.02px;font-size:13.5px;line-height:17px;color:#111;white-space:nowrap">Co-</div>
<div class="abs" style="left:1039.00px;top:354.02px;font-size:13.5px;line-height:17px;color:#111;white-space:nowrap">Lead</div>
<div class="abs" style="left:1100.00px;top:338.02px;font-size:13.5px;line-height:17px;color:#111;white-space:nowrap">New York</div>
<div class="abs" style="left:1208.70px;top:338.02px;font-size:13.5px;line-height:17px;color:#111;white-space:nowrap">On</div>
<div class="abs" style="left:1207.70px;top:354.02px;font-size:13.5px;line-height:17px;color:#111;white-space:nowrap">Plan</div>
<div class="abs" style="left:1275.70px;top:338.02px;font-size:13.5px;line-height:17px;color:#111;white-space:nowrap">Above</div>
<div class="abs" style="left:1274.70px;top:354.02px;font-size:13.5px;line-height:17px;color:#111;white-space:nowrap">Plan</div>
<div class="abs" style="left:12.20px;top:392.92px;font-size:13.5px;line-height:17px;color:#111;white-space:nowrap">6</div>
<div class="abs" style="left:54.30px;top:392.92px;font-size:13.5px;line-height:17px;color:#111;white-space:nowrap">PC YR 1</div>
<div class="abs" style="left:163.10px;top:392.92px;font-size:13.5px;line-height:17px;color:#111;white-space:nowrap">PC212</div>
<div class="abs" style="left:226.30px;top:392.92px;font-size:13.5px;line-height:17px;color:#111;white-space:nowrap">01/03/2012</div>
<div class="abs" style="left:319.00px;top:392.92px;font-size:13.5px;line-height:17px;color:#111;white-space:nowrap">GBP</div>
<div class="abs" style="left:407.80px;top:392.92px;font-size:13.5px;line-height:17px;color:#111;white-space:nowrap">Utilities</div>
<div class="abs" style="left:525.00px;top:392.92px;font-size:13.5px;line-height:17px;color:#111;white-space:nowrap">Electric Utilities</div>
<div class="abs" style="left:665.00px;top:392.92px;font-size:13.5px;line-height:17px;color:#111;white-space:nowrap">Minority</div>
<div class="abs" style="left:766.40px;top:392.92px;font-size:13.5px;line-height:17px;color:#111;white-space:nowrap">Expansion</div>
<div class="abs" style="left:767.40px;top:408.92px;font-size:13.5px;line-height:17px;color:#111;white-space:nowrap">(MBI)</div>
<div class="abs" style="left:866.80px;top:392.92px;font-size:13.5px;line-height:17px;color:#111;white-space:nowrap">No</div>
<div class="abs" style="left:945.80px;top:392.92px;font-size:13.5px;line-height:17px;color:#111;white-space:nowrap">Primary</div>
<div class="abs" style="left:1039.00px;top:392.92px;font-size:13.5px;line-height:17px;color:#111;white-space:nowrap">Follow</div>
<div class="abs" style="left:1101.00px;top:392.92px;font-size:13.5px;line-height:17px;color:#111;white-space:nowrap">Johannesburg</div>
<div class="abs" style="left:1208.70px;top:392.92px;font-size:13.5px;line-height:17px;color:#111;white-space:nowrap">Above</div>
<div class="abs" style="left:1207.70px;top:408.92px;font-size:13.5px;line-height:17px;color:#111;white-space:nowrap">Plan</div>
<div class="abs" style="left:1275.70px;top:392.92px;font-size:13.5px;line-height:17px;color:#111;white-space:nowrap">Above</div>
<div class="abs" style="left:1274.70px;top:408.92px;font-size:13.5px;line-height:17px;color:#111;white-space:nowrap">Plan</div></div>
</body></html>
